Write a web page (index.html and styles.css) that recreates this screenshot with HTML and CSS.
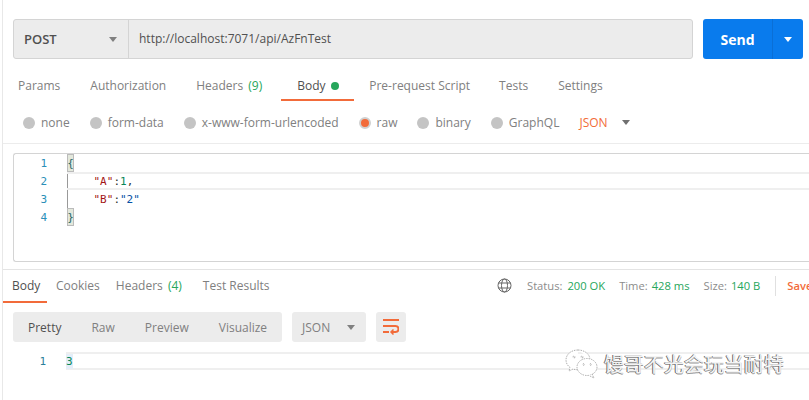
FILE: index.html
```html
<!DOCTYPE html>
<html lang="en">
<head>
<meta charset="utf-8">
<title>Postman</title>
<link rel="stylesheet" href="styles.css">
</head>
<body>
<div class="app">
  <section class="request">
    <div class="urlrow">
      <div class="urlbar">
        <div class="method"><span>POST</span><i class="caret caret-gray"></i></div>
        <div class="url">http://localhost:7071/api/AzFnTest</div>
      </div>
      <div class="send"><span class="send-label">Send</span><span class="send-more"><i class="caret caret-white"></i></span></div>
    </div>
    <nav class="reqtabs">
      <span class="t1">Params</span>
      <span class="t2">Authorization</span>
      <span class="t3">Headers <em>(9)</em></span>
      <span class="t4 active">Body<b class="dot"></b></span>
      <span class="t5">Pre-request Script</span>
      <span class="t6">Tests</span>
      <span class="t7">Settings</span>
    </nav>
    <div class="bodytypes">
      <label class="r1"><i class="radio"></i>none</label>
      <label class="r2"><i class="radio"></i>form-data</label>
      <label class="r3"><i class="radio"></i>x-www-form-urlencoded</label>
      <label class="r4"><i class="radio on"></i>raw</label>
      <label class="r5"><i class="radio"></i>binary</label>
      <label class="r6"><i class="radio"></i>GraphQL</label>
      <span class="lang">JSON</span><i class="caret caret-dark"></i>
    </div>
  </section>
  <section class="editor-wrap">
    <div class="editor">
      <div class="ln"><span class="num">1</span><span class="code"><span class="brace">{</span></span></div>
      <div class="ln cur"><span class="num">2</span><span class="code guide">    <span class="key">"A"</span><span class="p">:</span><span class="n">1</span><span class="p">,</span></span></div>
      <div class="ln"><span class="num">3</span><span class="code guide">    <span class="key">"B"</span><span class="p">:</span><span class="s">"2"</span></span></div>
      <div class="ln"><span class="num">4</span><span class="code"><span class="brace">}</span></span></div>
    </div>
  </section>
  <section class="response">
    <div class="restabs">
      <div class="restabs-left">
        <span class="a1 active">Body</span>
        <span class="a2">Cookies</span>
        <span class="a3">Headers <em>(4)</em></span>
        <span class="a4">Test Results</span>
      </div>
      <div class="meta">
        <svg class="globe" width="15" height="15" viewBox="0 0 15 15" fill="none" stroke="#666" stroke-width="1"><circle cx="7.500" cy="7.500" r="6.500"/><ellipse cx="7.500" cy="7.500" rx="3" ry="6.500"/><path d="M1.500 5h12M1.500 10h12"/></svg>
        <span class="k">Status:</span><span class="v">200 OK</span>
        <span class="k k2">Time:</span><span class="v">428 ms</span>
        <span class="k k2">Size:</span><span class="v">140 B</span>
        <span class="sep"></span>
        <span class="save">Save</span>
      </div>
    </div>
    <div class="toolbar">
      <div class="views">
        <span class="v1">Pretty</span><span class="v2">Raw</span><span class="v3">Preview</span><span class="v4">Visualize</span>
      </div>
      <div class="fmt"><span>JSON</span><i class="caret caret-gray"></i></div>
      <div class="wrapbtn">
        <svg width="16" height="16" viewBox="0 0 16 16" fill="none" stroke="#f26b3a" stroke-width="2"><path d="M0 1h16M0 7h12.500a3 3 0 0 1 0 6H8M0 13h6"/><path d="M10.500 10.500L8 13l2.500 2.500" stroke-width="1.500"/></svg>
      </div>
    </div>
    <div class="output">
      <span class="num">1</span><span class="outline"><span class="n">3</span></span>
    </div>
  </section>
  <div class="watermark">
    <svg width="33" height="30" viewBox="0 0 33 30" fill="#fff" stroke="#999" stroke-width="0.800" stroke-dasharray="1.500 1"><path d="M13 1C6 1 1 5.500 1 11c0 3 1.500 5.500 4 7.500L4 22l4-2c1.500.5 3 .7 4.500.7"/><path d="M13 1c6 0 11 3.500 12 8.500"/><ellipse cx="22" cy="18" rx="10" ry="8.500"/><path d="M27 25l2 4-5-2.500"/><circle cx="9" cy="8" r="1"/><circle cx="17" cy="8" r="1"/><circle cx="18.500" cy="15.500" r=".8"/><circle cx="25.500" cy="15.500" r=".8"/></svg>
    <span class="wm-text">馒哥不光会玩当耐特</span>
  </div>
</div>
</body>
</html>
```
FILE: styles.css
```css
* { box-sizing: border-box; }
html, body { margin: 0; padding: 0; }
body { background: #fff; width: 809px; height: 400px; overflow: hidden; font-family: "Open Sans", "Liberation Sans", sans-serif; font-size: 12px; color: #808080; }
em { font-style: normal; color: #26a65b; margin-left: 2px; }
i { display: block; font-style: normal; }
.app { position: relative; margin-left: 2px; height: 400px; border-left: 1px solid #e8e8e8; }

.caret { width: 0; height: 0; border-left: 4px solid transparent; border-right: 4px solid transparent; }
.caret-gray { border-top: 5px solid #808080; }
.caret-dark { border-top: 5px solid #707070; }
.caret-white { border-top: 5px solid #fff; }

.request { padding: 19px 0 0 10px; border-bottom: 1px solid #ececec; height: 144px; }
.urlrow { display: flex; gap: 10px; }
.urlbar { display: flex; width: 680px; height: 40px; background: #ececec; border: 1px solid #d4d4d4; border-radius: 3px; }
.method { width: 115px; flex: none; display: flex; align-items: center; justify-content: space-between; padding: 0 11px 0 10px; border-right: 1px solid #d4d4d4; font-size: 13px; color: #505050; font-weight: 600; }
.url { padding-left: 10px; line-height: 38px; font-size: 12px; color: #505050; }
.send { display: flex; width: 100px; height: 40px; background: #097bed; border-radius: 3px; color: #fff; font-weight: 700; font-size: 14px; }
.send-label { width: 69px; text-align: center; line-height: 41px; }
.send-more { flex: 1; border-left: 1px solid #0a6fd6; display: flex; align-items: center; justify-content: center; }

.reqtabs { display: flex; height: 42px; margin-left: -10px; }
.reqtabs span { line-height: 54px; height: 42px; white-space: nowrap; }
.t1 { margin-left: 15px; }
.t2 { margin-left: 30px; }
.t3 { margin-left: 30px; }
.t4 { margin-left: 19px; width: 73px; padding-left: 16px; color: #505050; border-bottom: 2px solid #f26b3a; }
.t5 { margin-left: 15px; }
.t6 { margin-left: 29px; }
.t7 { margin-left: 30px; }
.dot { display: inline-block; width: 8px; height: 8px; border-radius: 50%; background: #26a65b; margin-left: 5px; vertical-align: 0; }

.bodytypes { display: flex; align-items: center; height: 21px; margin-left: -10px; margin-top: 11px; }
.bodytypes label { display: flex; align-items: center; }
.radio { width: 12px; height: 12px; border-radius: 50%; background: #c4c4c4; margin-right: 6px; }
.radio.on { background: #f26b3a; border: 2px solid #d0d0d0; }
.r1 { margin-left: 20px; }
.r2 { margin-left: 20px; }
.r3 { margin-left: 20px; }
.r4 { margin-left: 20px; }
.r5 { margin-left: 20px; }
.r6 { margin-left: 20px; }
.lang { margin-left: 20px; color: #f26b3a; }
.bodytypes .caret { margin-left: 14px; }

.editor-wrap { height: 126px; padding: 9px 0 0 10px; border-bottom: 1px solid #e4e4e4; }
.editor { height: 109px; border: 1px solid #d4d4d4; border-right: 0; border-radius: 3px 0 0 3px; }
.ln { display: flex; height: 18px; font-family: "DejaVu Sans Mono", "Liberation Mono", monospace; font-size: 11px; line-height: 19px; }
.cur { border-top: 2px solid #efefef; border-bottom: 2px solid #efefef; line-height: 15px; margin-left: 53px; }
.cur .num { margin-left: -53px; }
.num { width: 53px; flex: none; padding-right: 20px; text-align: right; color: #2a8fb8; }
.code { white-space: pre; color: #333; }
.guide { box-shadow: inset 1px 0 0 #999; }
.brace { display: inline-block; width: 7px; height: 18px; background: #e3e8dc; outline: 1px solid #bbb; outline-offset: -1px; color: #2a6a6a; text-align: center; }
.key { color: #a31515; }
.p { color: #333; }
.n { color: #098658; }
.s { color: #0451a5; }

.restabs { display: flex; justify-content: space-between; height: 33px; }
.restabs-left { display: flex; }
.restabs-left span { height: 32px; line-height: 31px; white-space: nowrap; }
.restabs-left .a1 { width: 44px; padding-left: 9px; color: #505050; border-bottom: 2px solid #f26b3a; height: 33px; }
.a2 { margin-left: 9px; }
.a3 { margin-left: 16px; }
.a4 { margin-left: 21px; }
.meta { display: flex; align-items: center; white-space: nowrap; width: 312px; flex: none; font-size: 11.200px; height: 31px; overflow: hidden; }
.globe { margin-right: 15px; flex: none; }
.k { color: #8c8c8c; margin-right: 5px; }
.k2 { margin-left: 14px; margin-right: 4px; }
.v { color: #26a65b; }
.sep { width: 1px; height: 20px; background: #e0e0e0; margin: 0 11px 0 15px; flex: none; }
.save { color: #f26b3a; font-weight: 600; }

.toolbar { display: flex; gap: 10px; padding-left: 10px; margin-top: 9px; height: 30px; }
.views { display: flex; width: 269px; background: #ececec; border-radius: 3px; align-items: center; }
.v1 { margin-left: 15px; color: #505050; }
.v2 { margin-left: 30px; }
.v3 { margin-left: 30px; }
.v4 { margin-left: 30px; }
.fmt { width: 74px; background: #ececec; border-radius: 3px; display: flex; align-items: center; justify-content: space-between; padding: 0 11px 0 10px; }
.wrapbtn { width: 30px; background: #ececec; border-radius: 3px; display: flex; align-items: center; justify-content: center; }

.output { display: flex; margin-top: 10px; height: 18px; font-family: "DejaVu Sans Mono", "Liberation Mono", monospace; font-size: 11px; line-height: 19px; }
.outline { flex: 1; border-top: 2px solid #efefef; border-bottom: 2px solid #efefef; line-height: 15px; margin-left: 10px; }
.outline .n { display: inline-block; width: 7px; background: #e4eef8; }
.output .num { width: 53px; padding-right: 10px; color: #2a7f9a; }

.watermark { position: absolute; left: 562px; top: 349px; display: flex; align-items: center; gap: 6px; }
.wm-text { font-family: "Noto Sans CJK SC", sans-serif; font-size: 20px; line-height: 30px; color: #f4f4f4; text-shadow: -1px 0 0 #666, 0 1px 0 #999; white-space: nowrap; }
```
